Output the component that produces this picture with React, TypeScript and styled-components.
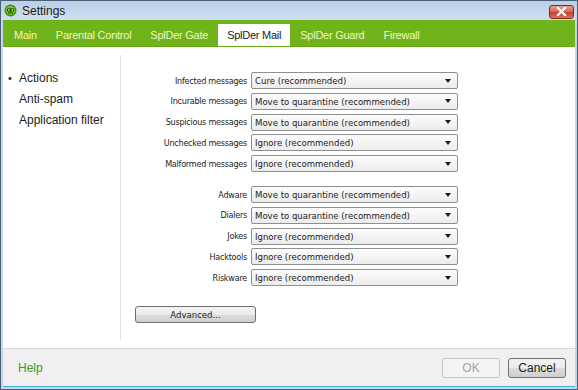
import React from 'react';
import styled, { createGlobalStyle } from 'styled-components';

const GlobalStyle = createGlobalStyle`
  html, body {
    margin: 0;
    padding: 0;
    background: #ffffff;
  }
  * {
    box-sizing: border-box;
  }
`;

const tabs = ['Main', 'Parental Control', 'SplDer Gate', 'SplDer Mail', 'SplDer Guard', 'Firewall'];
const sections = ['Actions', 'Anti-spam', 'Application filter'];

const mailRows = [
  { label: 'Infected messages', value: 'Cure (recommended)' },
  { label: 'Incurable messages', value: 'Move to quarantine (recommended)' },
  { label: 'Suspicious messages', value: 'Move to quarantine (recommended)' },
  { label: 'Unchecked messages', value: 'Ignore (recommended)' },
  { label: 'Malformed messages', value: 'Ignore (recommended)' },
];

const threatRows = [
  { label: 'Adware', value: 'Move to quarantine (recommended)' },
  { label: 'Dialers', value: 'Move to quarantine (recommended)' },
  { label: 'Jokes', value: 'Ignore (recommended)' },
  { label: 'Hacktools', value: 'Ignore (recommended)' },
  { label: 'Riskware', value: 'Ignore (recommended)' },
];

function AppIcon(): JSX.Element {
  return (
    <svg width="13" height="13" viewBox="0 0 13 13">
      <circle cx="6.5" cy="6.5" r="6" fill="#3f8f12" />
      <circle cx="6.5" cy="6.5" r="4.6" fill="#79c42a" />
      <rect x="3" y="4.5" width="7" height="3" rx="1" fill="#1f3a0c" />
      <circle cx="4.8" cy="6" r="0.9" fill="#b6e86a" />
      <circle cx="8.2" cy="6" r="0.9" fill="#b6e86a" />
      <path d="M4 9 L9 9" stroke="#1f3a0c" strokeWidth="1" />
    </svg>
  );
}

function SelectRow({ label, value }: { label: string; value: string }): JSX.Element {
  return (
    <Row>
      <Label>{label}</Label>
      <Select>
        <span>{value}</span>
        <Arrow />
      </Select>
    </Row>
  );
}

function App(): JSX.Element {
  return (
    <>
      <GlobalStyle />
      <Window>
        <TitleBar>
          <TitleLeft>
            <AppIcon />
            <Title>Settings</Title>
          </TitleLeft>
          <CloseButton>
            <svg width="11" height="9" viewBox="0 0 11 9">
              <path d="M2 1 L9 8 M9 1 L2 8" stroke="#ffffff" strokeWidth="2.2" strokeLinecap="square" />
            </svg>
          </CloseButton>
        </TitleBar>
        <Frame>
          <TabBar>
            {tabs.map((tab) => (
              <Tab key={tab} active={tab === 'SplDer Mail'}>
                {tab}
              </Tab>
            ))}
          </TabBar>
          <Body>
            <Sidebar>
              {sections.map((section, i) => (
                <SideItem key={section}>
                  <Bullet>{i === 0 ? '•' : ''}</Bullet>
                  {section}
                </SideItem>
              ))}
            </Sidebar>
            <Content>
              <Group>
                {mailRows.map((row) => (
                  <SelectRow key={row.label} label={row.label} value={row.value} />
                ))}
              </Group>
              <Group>
                {threatRows.map((row) => (
                  <SelectRow key={row.label} label={row.label} value={row.value} />
                ))}
              </Group>
              <AdvancedButton>Advanced...</AdvancedButton>
            </Content>
          </Body>
          <Footer>
            <HelpLink>Help</HelpLink>
            <Buttons>
              <DialogButton disabled>OK</DialogButton>
              <DialogButton>Cancel</DialogButton>
            </Buttons>
          </Footer>
        </Frame>
      </Window>
    </>
  );
}

const Window = styled.div`
  width: 578px;
  height: 390px;
  display: flex;
  flex-direction: column;
  border: 1px solid #4d5f73;
  background: #c3d8ee;
  font-family: 'Liberation Sans', Arial, sans-serif;
  overflow: hidden;
`;

const TitleBar = styled.div`
  height: 19px;
  display: flex;
  align-items: center;
  justify-content: space-between;
  padding: 0 3px 0 3px;
  background: linear-gradient(#b9d0e9, #cfdff0);
`;

const TitleLeft = styled.div`
  display: flex;
  align-items: center;
  gap: 5px;
`;

const Title = styled.span`
  font-size: 12px;
  color: #1b1b1b;
`;

const CloseButton = styled.div`
  width: 25px;
  height: 14px;
  margin-top: 2px;
  border: 1px solid #7a2a22;
  border-radius: 3px;
  display: flex;
  align-items: center;
  justify-content: center;
  background: linear-gradient(#e8a294 0%, #d66b58 45%, #c0432e 55%, #d9765f 100%);
`;

const Frame = styled.div`
  flex: 1;
  display: flex;
  flex-direction: column;
  margin: 0 2px 2px 2px;
  background: #ffffff;
  border-bottom: 1px solid #40b0d8;
`;

const TabBar = styled.div`
  height: 27px;
  display: flex;
  align-items: flex-end;
  padding-left: 2px;
  background: #70b31a;
  border-bottom: 1px solid #67a817;
`;

const Tab = styled.div<{ active?: boolean }>`
  height: 22px;
  display: flex;
  align-items: center;
  padding: 0 9px;
  margin-right: 1px;
  font-size: 11px;
  letter-spacing: -0.25px;
  color: ${({ active }) => (active ? '#1c1c1c' : '#eef6c6')};
  background: ${({ active }) => (active ? '#ffffff' : 'transparent')};
`;

const Body = styled.div`
  flex: 1;
  display: flex;
  padding: 8px 0 8px 0;
`;

const Sidebar = styled.div`
  width: 118px;
  padding-top: 14px;
  border-right: 1px solid #e2e2e2;
  display: flex;
  flex-direction: column;
  gap: 4px;
`;

const SideItem = styled.div`
  height: 17px;
  display: flex;
  align-items: center;
  font-size: 12px;
  color: #1c1c1c;
`;

const Bullet = styled.span`
  width: 16px;
  padding-left: 5px;
  font-size: 11px;
`;

const Content = styled.div`
  flex: 1;
  padding: 17px 0 0 14px;
  display: flex;
  flex-direction: column;
`;

const Group = styled.div`
  display: flex;
  flex-direction: column;
  gap: 3.75px;
  margin-bottom: 14px;
`;

const Row = styled.div`
  display: flex;
  align-items: center;
  gap: 4px;
`;

const Label = styled.span`
  width: 112px;
  text-align: right;
  font-family: 'DejaVu Sans Condensed', 'DejaVu Sans', sans-serif;
  font-size: 9px;
  letter-spacing: -0.25px;
  color: #1c1c1c;
  white-space: nowrap;
`;

const Select = styled.div`
  width: 207px;
  height: 17px;
  display: flex;
  align-items: center;
  justify-content: space-between;
  padding: 0 6px 0 3px;
  border: 1px solid #8e8f8f;
  border-radius: 2px;
  background: linear-gradient(#fcfcfc, #ececec);
  font-family: 'DejaVu Sans Condensed', 'DejaVu Sans', sans-serif;
  font-size: 9.5px;
  color: #1c1c1c;
`;

const Arrow = styled.span`
  width: 0;
  height: 0;
  border-left: 3.5px solid transparent;
  border-right: 3.5px solid transparent;
  border-top: 4px solid #1c1c1c;
`;

const AdvancedButton = styled.div`
  width: 121px;
  height: 17px;
  margin-top: 6px;
  display: flex;
  align-items: center;
  justify-content: center;
  border: 1px solid #707070;
  border-radius: 3px;
  background: linear-gradient(#f2f2f2 0%, #ebebeb 50%, #dddddd 51%, #cfcfcf 100%);
  font-family: 'DejaVu Sans Condensed', 'DejaVu Sans', sans-serif;
  font-size: 9.5px;
  color: #1c1c1c;
`;

const Footer = styled.div`
  height: 38px;
  display: flex;
  align-items: center;
  justify-content: space-between;
  padding: 0 9px 0 15px;
  background: #f0f0f0;
  border-top: 1px solid #d8d8d8;
`;

const HelpLink = styled.span`
  font-size: 12px;
  color: #3b9a1a;
`;

const Buttons = styled.div`
  display: flex;
  gap: 8px;
`;

const DialogButton = styled.div<{ disabled?: boolean }>`
  width: 58px;
  height: 20px;
  display: flex;
  align-items: center;
  justify-content: center;
  font-size: 12px;
  border-radius: 3px;
  border: 1px solid ${({ disabled }) => (disabled ? '#c4c4c4' : '#707070')};
  color: ${({ disabled }) => (disabled ? '#a3a3a3' : '#1c1c1c')};
  background: ${({ disabled }) =>
    disabled ? '#f4f4f4' : 'linear-gradient(#f2f2f2 0%, #ebebeb 50%, #dddddd 51%, #cfcfcf 100%)'};
`;

export default App;
